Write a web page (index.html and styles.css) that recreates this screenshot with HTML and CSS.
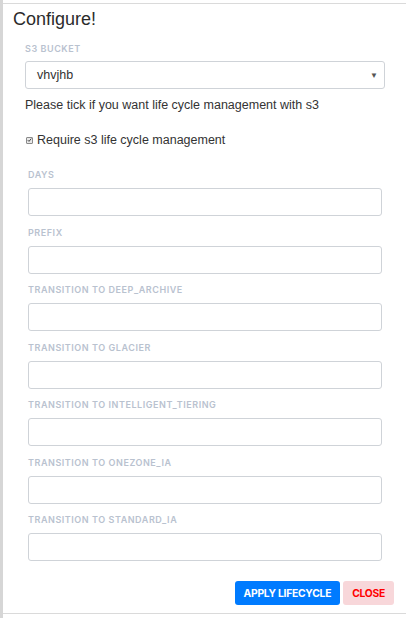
FILE: index.html
```html
<!DOCTYPE html>
<html>
<head>
<meta charset="utf-8">
<link rel="stylesheet" href="styles.css">
</head>
<body>
<div class="backdrop">
  <div class="modal">
    <h1 class="title">Configure!</h1>
    <div class="bucket">
      <label class="label">S3 Bucket</label>
      <div class="select">
        <span class="value">vhvjhb</span>
        <span class="caret">&#9660;</span>
      </div>
    </div>
    <p class="hint">Please tick if you want life cycle management with s3</p>
    <label class="check">
      <span class="box"><svg width="6" height="6" viewBox="0 0 8 8"><path d="M1.2 4.2 L3.2 6.2 L6.8 1.8" fill="none" stroke="#444" stroke-width="1.6"/></svg></span>
      Require s3 life cycle management
    </label>
    <div class="lifecycle">
      <div class="group"><label class="label">Days</label><div class="input"></div></div>
      <div class="group"><label class="label">Prefix</label><div class="input"></div></div>
      <div class="group"><label class="label">Transition to DEEP_ARCHIVE</label><div class="input"></div></div>
      <div class="group"><label class="label">Transition to GLACIER</label><div class="input"></div></div>
      <div class="group"><label class="label">Transition to INTELLIGENT_TIERING</label><div class="input"></div></div>
      <div class="group"><label class="label">Transition to ONEZONE_IA</label><div class="input"></div></div>
      <div class="group"><label class="label">Transition to STANDARD_IA</label><div class="input"></div></div>
    </div>
    <div class="actions">
      <button class="btn btn-primary">Apply Lifecycle</button>
      <button class="btn btn-close">Close</button>
    </div>
  </div>
</div>
</body>
</html>
```
FILE: styles.css
```css
* { box-sizing: border-box; }
html, body { margin: 0; padding: 0; background: #fff; }
body { font-family: "Liberation Sans", Arial, sans-serif; color: #333; }

.backdrop {
  display: flex;
  height: 618px;
  padding-top: 3px;
  border-left: 3px solid #d6d6d6;
}
.modal {
  flex: 1;
  height: 611px;
  border-top: 1px solid #dadada;
  border-bottom: 1px solid #dadada;
  display: flex;
  flex-direction: column;
}
.title {
  margin: 0;
  padding: 4px 10px 0;
  font-size: 18px;
  line-height: 22px;
  font-weight: normal;
  color: #2b2b2b;
}
.label {
  display: block;
  font-family: Inter, "Liberation Sans", sans-serif;
  font-size: 9px;
  line-height: 11px;
  font-weight: 600;
  letter-spacing: 0.55px;
  text-transform: uppercase;
  color: #b9c2cf;
}
.bucket { margin: 13px 21px 0 22px; }
.select {
  margin-top: 7px;
  height: 28px;
  border: 1px solid #cfd3d8;
  border-radius: 3px;
  display: flex;
  align-items: center;
  font-size: 12.5px;
}
.value { flex: 1; padding-left: 11px; }
.caret { font-size: 8px; color: #555; padding-right: 6px; }
.hint {
  margin: 8px 0 0 22px;
  font-size: 12.5px;
  line-height: 16px;
}
.check {
  margin: 19px 0 0 23px;
  display: flex;
  align-items: center;
  gap: 4px;
  font-size: 12.5px;
  line-height: 16px;
}
.box {
  width: 7px; height: 7px;
  border: 1px solid #8a8a8a;
  border-radius: 1px;
  background: #e8e8e8;
  display: flex;
  align-items: center;
  justify-content: center;
}
.lifecycle { margin: 21px 24px 0 25px; }
.group { margin-bottom: 10.5px; }
.group .label { margin-bottom: 8px; }
.input {
  height: 28px;
  border: 1px solid #cfd3d8;
  border-radius: 3px;
  background: #fff;
}
.actions {
  margin-top: 9px;
  display: flex;
  justify-content: flex-end;
  gap: 3px;
  padding-right: 12px;
}
.btn {
  height: 24px;
  border: none;
  border-radius: 3px;
  font-family: Inter, "Liberation Sans", sans-serif;
  font-weight: 700;
  font-size: 10.3px;
  text-transform: uppercase;
  padding: 0 9px;
  letter-spacing: -0.25px;
}
.btn-primary { background: #007bff; color: #fff; }
.btn-close { background: #f8d7da; color: #f00; }
```
